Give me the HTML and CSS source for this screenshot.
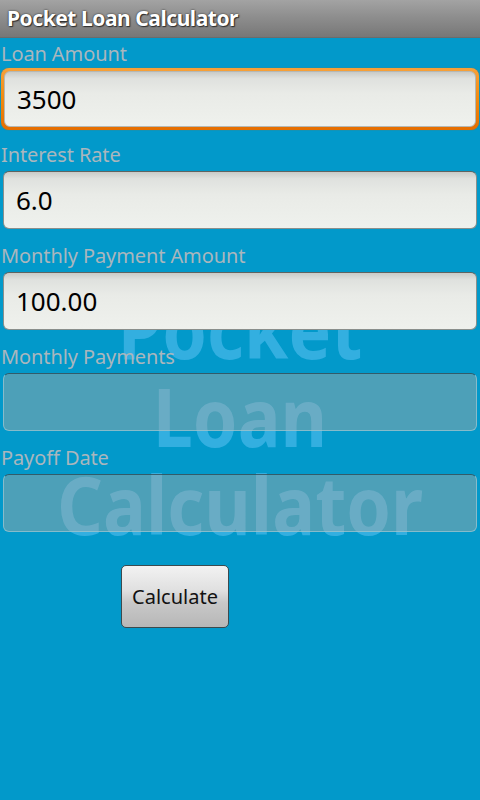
FILE: index.html
```html
<!DOCTYPE html>
<html>
<head>
<meta charset="utf-8">
<link rel="stylesheet" href="styles.css">
</head>
<body>
<div class="screen">
  <div class="titlebar">Pocket Loan Calculator</div>
  <div class="content">
    <div class="watermark">Pocket<br>Loan<br>Calculator</div>
    <div class="field-group">
      <label class="label">Loan Amount</label>
      <div class="input-wrap focused"><div class="input">3500</div></div>
    </div>
    <div class="field-group">
      <label class="label">Interest Rate</label>
      <div class="input-wrap"><div class="input">6.0</div></div>
    </div>
    <div class="field-group">
      <label class="label">Monthly Payment Amount</label>
      <div class="input-wrap"><div class="input">100.00</div></div>
    </div>
    <div class="field-group">
      <label class="label">Monthly Payments</label>
      <div class="input-wrap"><div class="input disabled"></div></div>
    </div>
    <div class="field-group">
      <label class="label">Payoff Date</label>
      <div class="input-wrap"><div class="input disabled"></div></div>
    </div>
    <div class="actions">
      <button class="btn">Calculate</button>
    </div>
  </div>
</div>
</body>
</html>
```
FILE: styles.css
```css
html, body {
  margin: 0;
  padding: 0;
}
body {
  width: 480px;
  height: 800px;
  background: #0299ca;
  font-family: "Noto Sans", "Open Sans", sans-serif;
  overflow: hidden;
}
.screen {
  display: flex;
  flex-direction: column;
  height: 800px;
}
.titlebar {
  height: 38px;
  box-sizing: border-box;
  padding: 3px 0 0 7px;
  background: linear-gradient(#a3a3a3, #8e8e8e 45%, #777777);
  color: #fff;
  font-weight: bold;
  font-size: 21px;
  letter-spacing: -0.45px;
  line-height: 30px;
  text-shadow: 0 0 2px #222, 1px 1px 1px #333;
  border-bottom: 1px solid #6c6c6c;
}
.content {
  position: relative;
  flex: 1;
  padding-top: 3px;
}
.watermark {
  position: absolute;
  left: 0;
  right: 0;
  top: 246px;
  height: 252px;
  overflow: hidden;
  text-align: center;
  font-weight: bold;
  font-size: 81px;
  line-height: 88px;
  color: #33afe0;
  transform: scaleX(0.885);
  z-index: 0;
}
.field-group {
  position: relative;
  z-index: 1;
  display: flex;
  flex-direction: column;
  height: 101px;
}
.label {
  color: #aab6bd;
  font-size: 20px;
  line-height: 26px;
  padding-left: 1px;
  height: 27px;
  letter-spacing: -0.1px;
}
.input-wrap {
  padding: 2px 3px;
  border-radius: 8px;
}
.input-wrap.focused {
  padding: 3px;
  margin: 0 1px;
  background: linear-gradient(#f7a13a, #f08a10 50%, #e56d00);
  box-shadow: 0 0 1px #c05a00;
}
.input {
  height: 58px;
  box-sizing: border-box;
  border-radius: 6px;
  border: 1px solid #8a8f8c;
  border-top-color: #5f6461;
  background: linear-gradient(#c9cbc8, #dfe1de 12%, #e9ebe7 40%, #eff1ed 100%);
  font-size: 26px;
  line-height: 56px;
  padding-left: 12px;
  color: #000;
}
.focused .input {
  height: 56px;
  border-color: #b5b8b4;
  line-height: 54px;
}
.input.disabled {
  background: rgba(180, 170, 160, 0.42);
  border-color: rgba(160, 200, 210, 0.7);
  border-top-color: rgba(40, 70, 80, 0.75);
}
.actions {
  position: relative;
  z-index: 1;
  padding: 19px 0 0 121px;
}
.btn {
  width: 108px;
  height: 63px;
  border-radius: 5px;
  border: 1px solid #3c4a4e;
  background: linear-gradient(#f2f2f2, #e0e0e0 40%, #c8c8c8 60%, #b7b7b7);
  font-family: "Noto Sans", "Open Sans", sans-serif;
  font-size: 20px;
  color: #111;
  padding: 0;
}
```
